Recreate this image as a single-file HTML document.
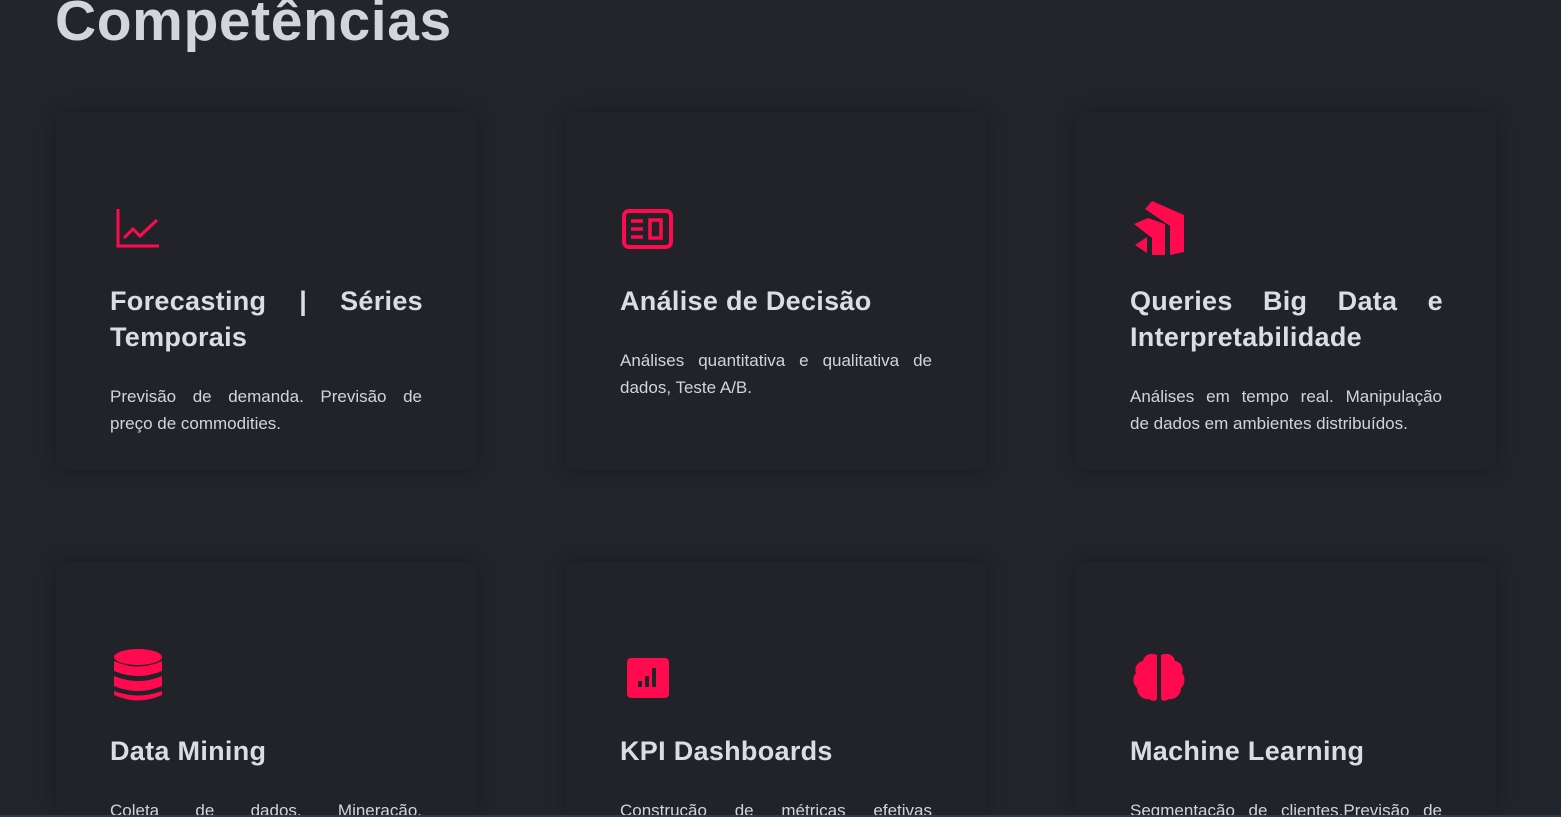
<!DOCTYPE html>
<html><head><meta charset="utf-8"><style>
*{margin:0;padding:0;box-sizing:border-box}
html,body{width:1561px;height:817px;overflow:hidden}
body{background:#22252b;font-family:"Liberation Sans",sans-serif;position:relative}
h1{position:absolute;left:55px;top:-12px;font-size:57px;font-weight:bold;color:#d2d5db;letter-spacing:0.6px}
.card{position:absolute;width:420px;height:358px;background:#212329;border-radius:8px;box-shadow:0 0 22px rgba(0,0,0,0.28);padding:96px 53px 0 54px}
.card.b{height:255px}
.ic{height:50px;margin-bottom:25px}
h3{font-size:27px;line-height:36px;font-weight:bold;color:#dcdde2;text-align:justify;letter-spacing:0.3px}
p{margin-top:28px;font-size:17px;line-height:27px;color:#d2d4da;width:312px}
p span{display:block;text-align:justify;text-align-last:justify;white-space:nowrap}
p span.l{text-align-last:left}
.bl{position:absolute;left:0;right:0;top:815px;height:2px;background:#2d3a48}
</style></head><body>
<h1>Competências</h1>

<div class="card" style="left:56px;top:112px">
<div class="ic"><svg width="50" height="50" viewBox="0 0 50 50"><path d="M8 1V38H49" fill="none" stroke="#ff0a4e" stroke-width="3"/><path d="M14 30L23 21L30 28L47 12" fill="none" stroke="#ff0a4e" stroke-width="3"/></svg></div>
<h3>Forecasting &nbsp; | &nbsp; Séries Temporais</h3>
<p><span>Previsão de demanda. Previsão de</span><span class="l">preço de commodities.</span></p>
</div>

<div class="card" style="left:566px;top:112px">
<div class="ic"><svg width="56" height="50" viewBox="0 0 56 50"><rect x="4" y="3" width="47" height="36" rx="5" fill="none" stroke="#ff0a4e" stroke-width="4"/><path d="M11 13H23M11 21H23M11 29H23" stroke="#ff0a4e" stroke-width="3.5"/><rect x="30" y="12" width="11" height="18" fill="none" stroke="#ff0a4e" stroke-width="3.5"/></svg></div>
<h3>Análise de Decisão</h3>
<p><span>Análises quantitativa e qualitativa de</span><span class="l">dados, Teste A/B.</span></p>
</div>

<div class="card" style="left:1076px;top:112px">
<div class="ic"><svg width="60" height="60" viewBox="1128 198 60 60" style="margin-top:-10px"><path d="M1143 209L1150 201L1182 215L1182 252L1168 255L1168 226Z" fill="#ff0a4e"/><path d="M1132 224L1146 218L1163 224L1163 255L1150 255L1150 238Z" fill="#ff0a4e"/><path d="M1133 245L1145 237L1145 253Z" fill="#ff0a4e"/></svg></div>
<h3>Queries Big Data e Interpretabilidade</h3>
<p><span>Análises em tempo real. Manipulação</span><span class="l">de dados em ambientes distribuídos.</span></p>
</div>

<div class="card b" style="left:56px;top:562px">
<div class="ic"><svg width="56" height="56" viewBox="0 0 56 56" style="margin-top:-10px;margin-left:3px"><ellipse cx="25" cy="9" rx="24" ry="8" fill="#ff0a4e"/><path d="M1 13Q25 24 49 13V23Q25 33 1 23Z" fill="#ff0a4e"/><path d="M1 28Q25 38 49 28V38Q25 48 1 38Z" fill="#ff0a4e"/><path d="M1 43Q25 52 49 43V47Q25 58 1 47Z" fill="#ff0a4e"/></svg></div>
<h3>Data Mining</h3>
<p><span>Coleta de dados. Mineração.</span></p>
</div>

<div class="card b" style="left:566px;top:562px">
<div class="ic"><svg width="56" height="50" viewBox="0 0 56 50" style="margin-left:3px"><rect x="4" y="0" width="42" height="40" rx="4" fill="#ff0a4e"/><rect x="15" y="23" width="4" height="6" fill="#212329"/><rect x="22" y="18" width="4" height="11" fill="#212329"/><rect x="29" y="10" width="4" height="19" fill="#212329"/></svg></div>
<h3>KPI Dashboards</h3>
<p><span>Construção de métricas efetivas</span></p>
</div>

<div class="card b" style="left:1076px;top:562px">
<div class="ic"><svg width="60" height="54" viewBox="0 0 60 54" style="margin-top:-8px"><path d="M27 5C20 2 14 5 13 11C7 12 4 18 6 23C2 27 3 35 7 38C7 45 13 50 19 49C23 52 27 51 27 48Z" fill="#ff0a4e"/><path d="M31 5C38 2 44 5 45 11C51 12 54 18 52 23C56 27 55 35 51 38C51 45 45 50 39 49C35 52 31 51 31 48Z" fill="#ff0a4e"/></svg></div>
<h3>Machine Learning</h3>
<p><span>Segmentação de clientes.Previsão de</span></p>
</div>
<div class="bl"></div>
</body></html>
